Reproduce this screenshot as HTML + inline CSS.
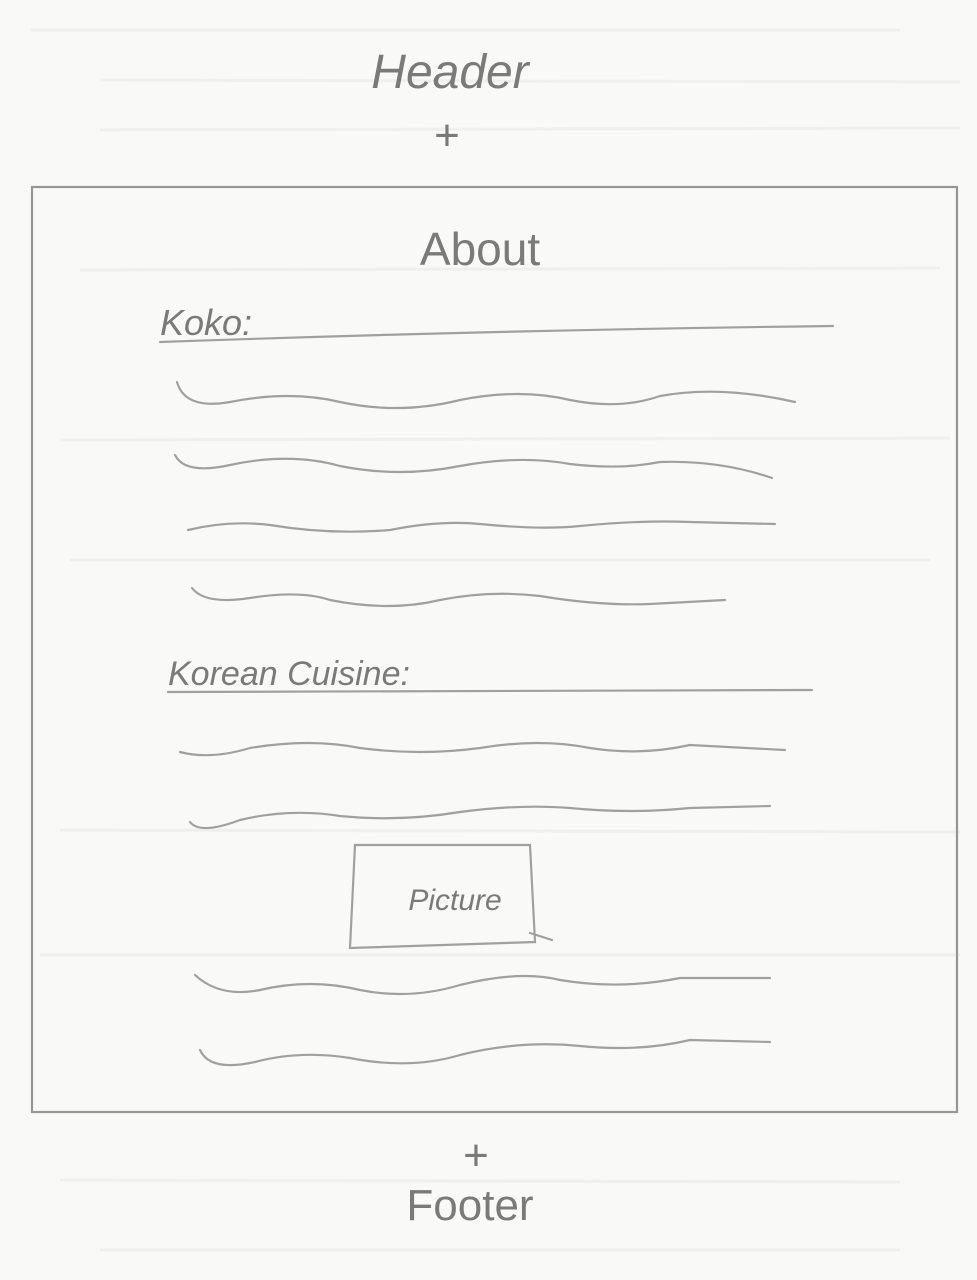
<!DOCTYPE html>
<html><head><meta charset="utf-8"><style>
html,body{margin:0;padding:0;background:#f9f9f8;}
svg{display:block}
text{font-family:"Liberation Sans",sans-serif;fill:#7a7a7a;}
</style></head><body>
<svg width="977" height="1280" viewBox="0 0 977 1280" xmlns="http://www.w3.org/2000/svg">
<rect width="977" height="1280" fill="#f9f9f8"/>
<g stroke="#efefed" stroke-width="3" fill="none">
<path d="M30 30 L900 30"/><path d="M100 80 L960 82"/><path d="M100 130 L960 128"/>
<path d="M80 270 L940 268"/><path d="M60 440 L950 438"/><path d="M70 560 L930 560"/>
<path d="M60 830 L960 832"/><path d="M40 955 L960 955"/><path d="M60 1180 L900 1182"/>
<path d="M100 1250 L900 1250"/>
</g>
<g fill="none" stroke="#a0a0a0" stroke-width="2.2" stroke-linecap="round">
<rect x="32" y="187" width="925" height="925" stroke="#969696"/>
<path d="M160 342 Q500 330 833 326"/>
<path d="M168 692 Q500 690 812 690"/>
<path d="M177 382 Q185 410 230 402 Q290 390 340 402 Q400 415 460 400 Q520 388 570 400 Q620 410 660 396 Q720 385 795 402"/>
<path d="M175 455 Q185 475 230 465 Q290 452 340 466 Q400 478 460 466 Q520 455 570 464 Q620 470 660 462 Q720 460 772 478"/>
<path d="M188 530 Q230 520 270 525 Q330 535 390 530 Q440 520 480 524 Q540 530 580 526 Q640 520 690 522 L775 524"/>
<path d="M192 588 Q205 605 250 598 Q300 590 330 600 Q390 612 440 600 Q490 590 540 596 Q600 606 650 604 L725 600"/>
<path d="M180 752 Q210 760 250 748 Q310 738 360 748 Q420 756 480 748 Q540 738 590 748 Q640 756 690 745 L785 750"/>
<path d="M190 822 Q200 835 240 820 Q290 808 340 816 Q400 822 460 812 Q520 804 570 808 Q630 814 690 808 L770 806"/>
<path d="M355 845 L530 845 L535 942 L350 948 Z"/>
<path d="M530 933 L552 940"/>
<path d="M195 975 Q220 998 260 990 Q310 978 360 990 Q410 1000 460 985 Q520 970 560 980 Q620 990 680 978 L770 978"/>
<path d="M200 1050 Q210 1072 255 1062 Q300 1050 350 1058 Q410 1070 460 1055 Q520 1040 580 1046 Q640 1052 690 1040 L770 1042"/>
</g>
<text x="450" y="88" font-size="48" text-anchor="middle" font-style="italic">Header</text>
<text x="447" y="150" font-size="44" text-anchor="middle">+</text>
<text x="480" y="265" font-size="46" text-anchor="middle">About</text>
<text x="160" y="335" font-size="36" font-style="italic">Koko:</text>
<text x="168" y="685" font-size="34" font-style="italic">Korean Cuisine:</text>
<text x="455" y="910" font-size="30" text-anchor="middle" font-style="italic">Picture</text>
<text x="476" y="1170" font-size="44" text-anchor="middle">+</text>
<text x="470" y="1220" font-size="44" text-anchor="middle">Footer</text>
</svg>
</body></html>
